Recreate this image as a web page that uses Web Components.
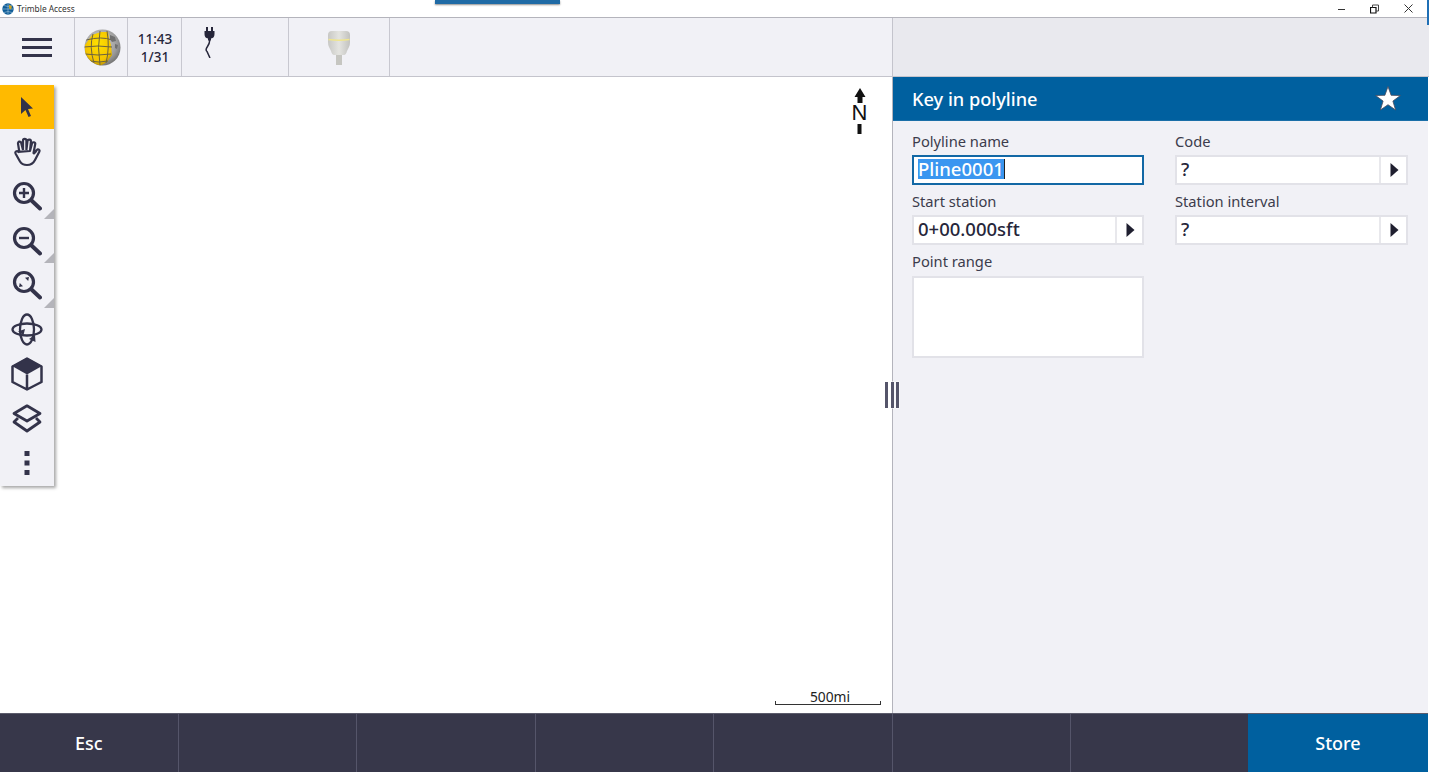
<!DOCTYPE html>
<html>
<head>
<meta charset="utf-8">
<title>Trimble Access</title>
<style>
    html, body { margin: 0; height: 100%; overflow: hidden; background: #fff; }
    body { font-family: "Noto Sans", "Open Sans", sans-serif; color: #26263a; }
</style>
</head>
<body>
<ta-app>
    <ta-titlebar slot="title">Trimble Access</ta-titlebar>
    <ta-statusbar slot="status"></ta-statusbar>
    <ta-map slot="map"></ta-map>
    <ta-form slot="form" heading="Key in polyline"></ta-form>
    <ta-softkeys slot="keys">
        <ta-softkey>Esc</ta-softkey>
        <ta-softkey></ta-softkey>
        <ta-softkey></ta-softkey>
        <ta-softkey></ta-softkey>
        <ta-softkey></ta-softkey>
        <ta-softkey></ta-softkey>
        <ta-softkey></ta-softkey>
        <ta-softkey primary>Store</ta-softkey>
    </ta-softkeys>
</ta-app>

<script type="text/javascript">
    // tiny helper: every element gets an open shadow root from a html string
    class Base extends HTMLElement {
        constructor() {
            super();
            this.attachShadow({mode: 'open'});
        }
        render(html) {
            this.shadowRoot.innerHTML = html;
        }
    }

    class TaApp extends Base {
        connectedCallback() {
            this.render(`
            <style>
                :host { display: flex; flex-direction: column; height: 772px; width: 1429px; position: relative; overflow: hidden; }
                .main { flex: 1; display: flex; min-height: 0; }
                .left { width: 893px; display: flex; }
                .right { flex: 1; display: flex; }
                ::slotted(ta-map) { flex: 1; }
                ::slotted(ta-form) { flex: 1; }
                .grip { position: absolute; left: 884px; top: 382px; width: 16px; height: 26px; display: flex; gap: 2.5px; justify-content: center; }
                .grip i { width: 3px; background: #55556a; box-shadow: 0 0 0 .5px #fff; }
                .peek { position: absolute; left: 435px; top: 0; width: 125px; height: 4px; background: #1f6aa5; box-shadow: 0 1px 2px rgba(0,0,0,.45); }
                .peek2 { position: absolute; left: 1427px; top: 0; width: 2px; height: 25px; background: #1f6fb5; }
            </style>
            <slot name="title"></slot>
            <slot name="status"></slot>
            <div class="main">
                <div class="left"><slot name="map"></slot></div>
                <div class="right"><slot name="form"></slot></div>
            </div>
            <slot name="keys"></slot>
            <div class="grip"><i></i><i></i><i></i></div>
            <div class="peek"></div>
            <div class="peek2"></div>`);
        }
    }

    class TaTitlebar extends Base {
        connectedCallback() {
            this.render(`
            <style>
                :host { display: flex; align-items: center; height: 17px; background: #fff; border-bottom: 1px solid #b4b4bc; font-size: 8.35px; color: #333; padding-left: 2px; }
                .logo { width: 12px; height: 12px; margin-right: 3px; }
                .title { flex: 1; }
                .btn { width: 33px; height: 17px; display: flex; align-items: center; justify-content: center; }
                .btns { display: flex; margin-right: 4px; }
                .min { margin-right: 3px; }
                .restore { margin-right: 2px; }
            </style>
            <svg class="logo" viewBox="0 0 12 12">
                <circle cx="6" cy="6" r="5.7" fill="#0e5c97"/>
                <path d="M6 .5v11M.5 6h11M2 2.5q4 2 8 0M2 9.5q4-2 8 0" stroke="#8fb8d4" stroke-width=".7" fill="none"/>
                <path d="M7 1.5l3 2-1 3-2-1z" fill="#c9a227"/>
            </svg>
            <span class="title"><slot></slot></span>
            <div class="btns">
                <div class="btn"><svg class="min" width="7" height="10" viewBox="0 0 7 10"><path d="M0 5.5h7" stroke="#333" fill="none"/></svg></div>
                <div class="btn"><svg class="restore" width="9" height="10" viewBox="0 0 9 10"><path d="M.5 3.500h5.500v5.500h-5.500z" stroke="#111" stroke-width="1.200" fill="none"/><path d="M2.500 3.500v-2.500h6v6h-2.500" stroke="#444" fill="none"/></svg></div>
                <div class="btn"><svg width="9" height="9" viewBox="0 0 9 9"><path d="M.5 .5l8 8M8.500 .5l-8 8" stroke="#333" fill="none"/></svg></div>
            </div>`);
        }
    }

    class TaStatusbar extends Base {
        connectedCallback() {
            this.render(`
            <style>
                :host { display: flex; height: 59px; box-sizing: border-box; background: #e9e9ee; border-bottom: 1px solid #c4c4cc; }
                .strip { width: 893px; box-sizing: border-box; display: flex; background: #f1f1f6; border-right: 1px solid #c4c4cc; }
                .cell { border-right: 1px solid #c8c8d0; box-sizing: border-box; display: flex; align-items: center; justify-content: center; }
                .menu { width: 75px; }
                .globe { width: 53px; padding-left: 3px; }
                .time { width: 54px; flex-direction: column; font-size: 13.5px; font-weight: 500; line-height: 18px; color: #26263a; padding-top: 1px; padding-left: 1px; }
                .power { width: 107px; justify-content: flex-start; align-items: flex-start; padding: 9px 0 0 22px; }
                .gnss { width: 101px; padding-top: 2px; }
                .bars { width: 30px; display: flex; flex-direction: column; gap: 5px; }
                .bars i { display: block; height: 3px; background: #33334a; }
            </style>
            <div class="strip">
                <div class="cell menu"><div class="bars"><i></i><i></i><i></i></div></div>
                <div class="cell globe">
                    <svg width="37" height="37" viewBox="0 0 37 37">
                        <defs>
                            <radialGradient id="g" cx=".42" cy=".38" r=".7">
                                <stop offset="0" stop-color="#dcdcdc"/><stop offset=".7" stop-color="#9a9a9a"/><stop offset="1" stop-color="#666"/>
                            </radialGradient>
                            <radialGradient id="y" cx=".5" cy=".35" r=".7">
                                <stop offset="0" stop-color="#ffe100"/><stop offset=".7" stop-color="#f4c400"/><stop offset="1" stop-color="#a88000"/>
                            </radialGradient>
                            <clipPath id="ball"><circle cx="18.5" cy="18.5" r="18"/></clipPath>
                        </defs>
                        <circle cx="18.5" cy="18.5" r="18" fill="url(#g)"/>
                        <g clip-path="url(#ball)">
                            <path d="M1 16 L8 6 L17 3 L24 3 L25 9 L27 16 L28 26 L23 33 L16 37 L7 33 L1 25z" fill="url(#y)"/>
                            <path d="M2 11q16-4 26 0M0 18q14-2 28 0M1 25q13 2 26 0M6 32q9 2 18 0M9 5Q5 18 10 34M16 2q-3 16 0 34M23 2q3 16 -1 32" stroke="#6b6340" stroke-width="1" fill="none"/>
                            <path d="M26 6l5 2 1 4-4 1-2-3zM31 15l3 1-1 4-2-1z" fill="#707070"/>
                        </g>
                    </svg>
                </div>
                <div class="cell time"><div>11:43</div><div>1/31</div></div>
                <div class="cell power">
                    <svg width="11" height="31" viewBox="0 0 11 31">
                        <path d="M3 0v4M8 0v4" stroke="#26263a" stroke-width="2" fill="none"/>
                        <path d="M.5 4h10v3q0 4-3.500 4.500v2h-3v-2q-3.500-.5-3.500-4.500z" fill="#26263a"/>
                        <path d="M5.500 13q.5 3-2 6.500t-.5 5l3 6.500" stroke="#26263a" stroke-width="1.500" fill="none"/>
                    </svg>
                </div>
                <div class="cell gnss">
                    <svg width="24" height="36" viewBox="0 0 24 36">
                        <defs>
                            <linearGradient id="r" x1="0" x2="1" y1="0" y2="0">
                                <stop offset="0" stop-color="#c8c8c5"/><stop offset=".5" stop-color="#e4e4e0"/><stop offset="1" stop-color="#c2c2bf"/>
                            </linearGradient>
                        </defs>
                        <path d="M1 5q0-4 4-4h14q4 0 4 4v7q0 3-1 5l-2 4q-1 4-3 4H7q-2 0-3-4l-2-4q-1-2-1-5z" fill="url(#r)"/>
                        <path d="M1.500 9.500q10.500 1.500 21 0" stroke="#efe58f" stroke-width="1.500" fill="none"/>
                        <rect x="9" y="25" width="6" height="10" fill="#c6c6c1"/>
                    </svg>
                </div>
            </div>`);
        }
    }

    class TaTool extends Base {
        static get observedAttributes() { return ['active', 'more']; }
        attributeChangedCallback() { this._draw(); }
        connectedCallback() { this._draw(); }
        _draw() {
            this.render(`
            <style>
                :host { display: flex; align-items: center; justify-content: center; height: 44.5px; position: relative; color: #33334a; }
                :host([active]) { background: #ffba00; height: 44px; margin-bottom: .5px; }
                .more { position: absolute; right: 0; bottom: 0; width: 0; height: 0; border-left: 10px solid transparent; border-bottom: 10px solid #b4b4ba; }
                ::slotted(svg) { display: block; }
            </style>
            <slot></slot>
            ${this.hasAttribute('more') ? '<div class="more"></div>' : ''}`);
        }
    }

    class TaToolbar extends Base {
        connectedCallback() {
            this.render(`
            <style>
                :host { display: block; position: absolute; left: 0; top: 8px; width: 53.5px; background: #f1f1f6; box-shadow: 2px 2px 3px rgba(0,0,0,.35); }
            </style>
            <slot></slot>`);
        }
    }

    class TaMap extends Base {
        connectedCallback() {
            this.render(`
            <style>
                :host { display: block; position: relative; background: #fff; border-right: 1px solid #b4b4bc; overflow: hidden; }
                .north { position: absolute; left: 851px; top: 11px; width: 17px; display: flex; flex-direction: column; align-items: center; }
                .north span { font-family: "Liberation Sans", Arial, sans-serif; font-size: 22px; line-height: 18px; color: #111; height: 18px; margin-top: 1px; }
                .scale { position: absolute; left: 775px; top: 610px; width: 106px; height: 18px; box-sizing: border-box; border-bottom: 1px solid #333; padding-left: 4px; text-align: center; font-size: 13.8px; line-height: 19px; color: #222; }
                .scale::before, .scale::after { content: ""; position: absolute; bottom: 0; width: 1px; height: 3px; background: #333; }
                .scale::before { left: 0; }
                .scale::after { right: 0; }
            </style>
            <ta-toolbar>
                <ta-tool active><svg width="16" height="22" viewBox="0 0 16 22"><path d="M2 1l12 11.500-5 .5 3 7-2.500 1-3-7-4.500 4z" fill="#33334a"/></svg></ta-tool>
                <ta-tool><svg width="28" height="30" viewBox="0 0 28 30"><path d="M6.500 16L5 6.500a1.600 1.600 0 0 1 3.200-.5L10 13M10 13V3.500a1.700 1.700 0 0 1 3.400 0V13M13.400 13L14.500 4a1.700 1.700 0 0 1 3.400 .5L17 14M17 14l2-7.500a1.600 1.600 0 0 1 3.200 .8L20.500 16q.5 1 1.500-.5l1.800-2.500a1.500 1.500 0 0 1 2.500 1.700L22 23q-2.500 5-8 5-5 0-7-3.500L2.500 16.500a1.600 1.600 0 0 1 2.700-1.700z" fill="none" stroke="#33334a" stroke-width="2.200" stroke-linejoin="round"/></svg></ta-tool>
                <ta-tool more><svg width="30" height="30" viewBox="0 0 30 30"><circle cx="12" cy="12" r="9.500" fill="none" stroke="#33334a" stroke-width="3.200"/><path d="M19.500 19.500L28 27.500" stroke="#33334a" stroke-width="4" stroke-linecap="round"/><path d="M12 7v10M7 12h10" stroke="#33334a" stroke-width="2.400"/></svg></ta-tool>
                <ta-tool more><svg width="30" height="30" viewBox="0 0 30 30"><circle cx="12" cy="12" r="9.500" fill="none" stroke="#33334a" stroke-width="3.200"/><path d="M19.500 19.500L28 27.500" stroke="#33334a" stroke-width="4" stroke-linecap="round"/><path d="M7 12h10" stroke="#33334a" stroke-width="2.400"/></svg></ta-tool>
                <ta-tool more><svg width="30" height="30" viewBox="0 0 30 30"><circle cx="12" cy="12" r="9.500" fill="none" stroke="#33334a" stroke-width="3.200"/><path d="M19.500 19.500L28 27.500" stroke="#33334a" stroke-width="4" stroke-linecap="round"/><path d="M7 17l.8-4 3.200 3.200zM17 7l-.8 4-3.200-3.200z" fill="#33334a"/></svg></ta-tool>
                <ta-tool><svg width="32" height="33" viewBox="0 0 32 33"><ellipse cx="16" cy="16.500" rx="14.500" ry="6" fill="none" stroke="#33334a" stroke-width="2.300"/><ellipse cx="16" cy="16.500" rx="7" ry="15" fill="none" stroke="#33334a" stroke-width="2.300"/><path d="M7 18.500l7-2.500-1.500 6zM18 26l6-4 .5 7z" fill="#33334a"/></svg></ta-tool>
                <ta-tool><svg width="32" height="34" viewBox="0 0 32 34"><path d="M16 1L31 9 16 17.500 1 9z" fill="#33334a"/><path d="M16 1.500L30.500 9.500V25L16 32.500 1.500 25V9.500zM16 17.500V32.500" fill="none" stroke="#33334a" stroke-width="2.500" stroke-linejoin="round"/></svg></ta-tool>
                <ta-tool><svg width="30" height="30" viewBox="0 0 30 30"><path d="M15 1.800L28 9.500 15 17 2 9.500z" fill="none" stroke="#33334a" stroke-width="2.800" stroke-linejoin="round"/><path d="M6 14L2 18 15 27 28 18 24 14" fill="none" stroke="#33334a" stroke-width="2.800" stroke-linejoin="round"/></svg></ta-tool>
                <ta-tool><svg width="6" height="26" viewBox="0 0 6 26"><path d="M.5 1h5v5h-5zM.5 10.500h5v5h-5zM.5 20h5v5h-5z" fill="#33334a"/></svg></ta-tool>
            </ta-toolbar>
            <div class="north">
                <svg width="12" height="15" viewBox="0 0 12 15" style="display:block"><path d="M6 0l5.500 9H8.500v6h-5V9H.5z" fill="#111"/></svg>
                <span>N</span>
                <svg width="5" height="10" viewBox="0 0 5 10" style="display:block;margin-top:2px"><rect x=".5" width="4" height="10" fill="#111"/></svg>
            </div>
            <div class="scale">500mi</div>`);
        }
    }

    class TaField extends Base {
        connectedCallback() {
            const label = this.getAttribute('label');
            const value = this.getAttribute('value') || '';
            const focused = this.hasAttribute('focused');
            const arrow = this.hasAttribute('arrow');
            const tall = this.hasAttribute('tall');
            this.render(`
            <style>
                :host { display: block; }
                label { display: block; font-size: 14.7px; line-height: 17px; height: ${tall ? 23 : 22}px; color: #3c3c4c; }
                .box { display: flex; height: ${tall ? 82 : 30}px; box-sizing: border-box; background: #fff; border: 2px solid ${focused ? '#1268a5' : '#e2e2e8'}; font-size: 18.5px; font-weight: 500; color: #26263a; }
                .val { flex: 1; padding-left: 4px; line-height: 23px; white-space: nowrap; }
                .sel { background: #3a96f0; color: #fff; display: inline-block; line-height: 20px; height: 20px; margin-top: 2px; border-right: 1px solid #222; vertical-align: top; }
                .btn { width: 27px; box-sizing: border-box; border-left: 2px solid #e8e8ec; padding-left: 1px; display: flex; align-items: center; justify-content: center; }
                .btn svg { display: block; }
            </style>
            <label>${label}</label>
            <div class="box">
                <div class="val">${focused ? '<span class="sel">' + value + '</span>' : value}</div>
                ${arrow ? '<div class="btn"><svg width="9" height="14" viewBox="0 0 9 14"><path d="M.5 0L8.500 7 .5 14z" fill="#1f1f30"/></svg></div>' : ''}
            </div>`);
        }
    }

    class TaForm extends Base {
        connectedCallback() {
            this.render(`
            <style>
                :host { display: block; background: #f1f1f6; border-right: 1px solid #fff; }
                .head { height: 44px; box-sizing: border-box; background: #00609f; color: #fff; display: flex; align-items: center; justify-content: space-between; padding: 0 26px 0 19px; font-size: 18.2px; font-weight: 500; border-bottom: 1px solid #1a6fa8; }
                .grid { display: grid; grid-template-columns: 232px 233px; column-gap: 31px; row-gap: 8px; padding: 12px 0 0 19px; }
            </style>
            <div class="head">
                <span>${this.getAttribute('heading')}</span>
                <svg width="28" height="27" viewBox="0 0 28 27"><path d="M14 1.500L17.100 10.300 26.400 10.500 18.900 16.100 21.600 25 14 19.700 6.400 25 9.100 16.100 1.600 10.500 10.900 10.300z" fill="#fff" stroke="#4a4a5a" stroke-width=".8"/></svg>
            </div>
            <div class="grid">
                <ta-field label="Polyline name" value="Pline0001" focused></ta-field>
                <ta-field label="Code" value="?" arrow></ta-field>
                <ta-field label="Start station" value="0+00.000sft" arrow></ta-field>
                <ta-field label="Station interval" value="?" arrow></ta-field>
                <ta-field label="Point range" tall></ta-field>
            </div>`);
        }
    }

    class TaSoftkeys extends Base {
        connectedCallback() {
            this.render(`
            <style>
                :host { display: grid; grid-template-columns: repeat(8, 178.5px); width: 1428px; height: 59px; background: #37374a; border-top: 1px solid #5c5c6c; box-sizing: border-box; }
            </style>
            <slot></slot>`);
        }
    }

    class TaSoftkey extends Base {
        connectedCallback() {
            this.render(`
            <style>
                :host { display: flex; align-items: center; justify-content: center; color: #fff; font-size: 18px; font-weight: 500; border-right: 1px solid #55556a; box-sizing: border-box; }
                :host([primary]) { background: #00609f; border-right: 0; margin-left: -1.5px; }
            </style>
            <slot></slot>`);
        }
    }

    customElements.define('ta-app', TaApp);
    customElements.define('ta-titlebar', TaTitlebar);
    customElements.define('ta-statusbar', TaStatusbar);
    customElements.define('ta-tool', TaTool);
    customElements.define('ta-toolbar', TaToolbar);
    customElements.define('ta-map', TaMap);
    customElements.define('ta-field', TaField);
    customElements.define('ta-form', TaForm);
    customElements.define('ta-softkeys', TaSoftkeys);
    customElements.define('ta-softkey', TaSoftkey);
</script>
</body>
</html>
